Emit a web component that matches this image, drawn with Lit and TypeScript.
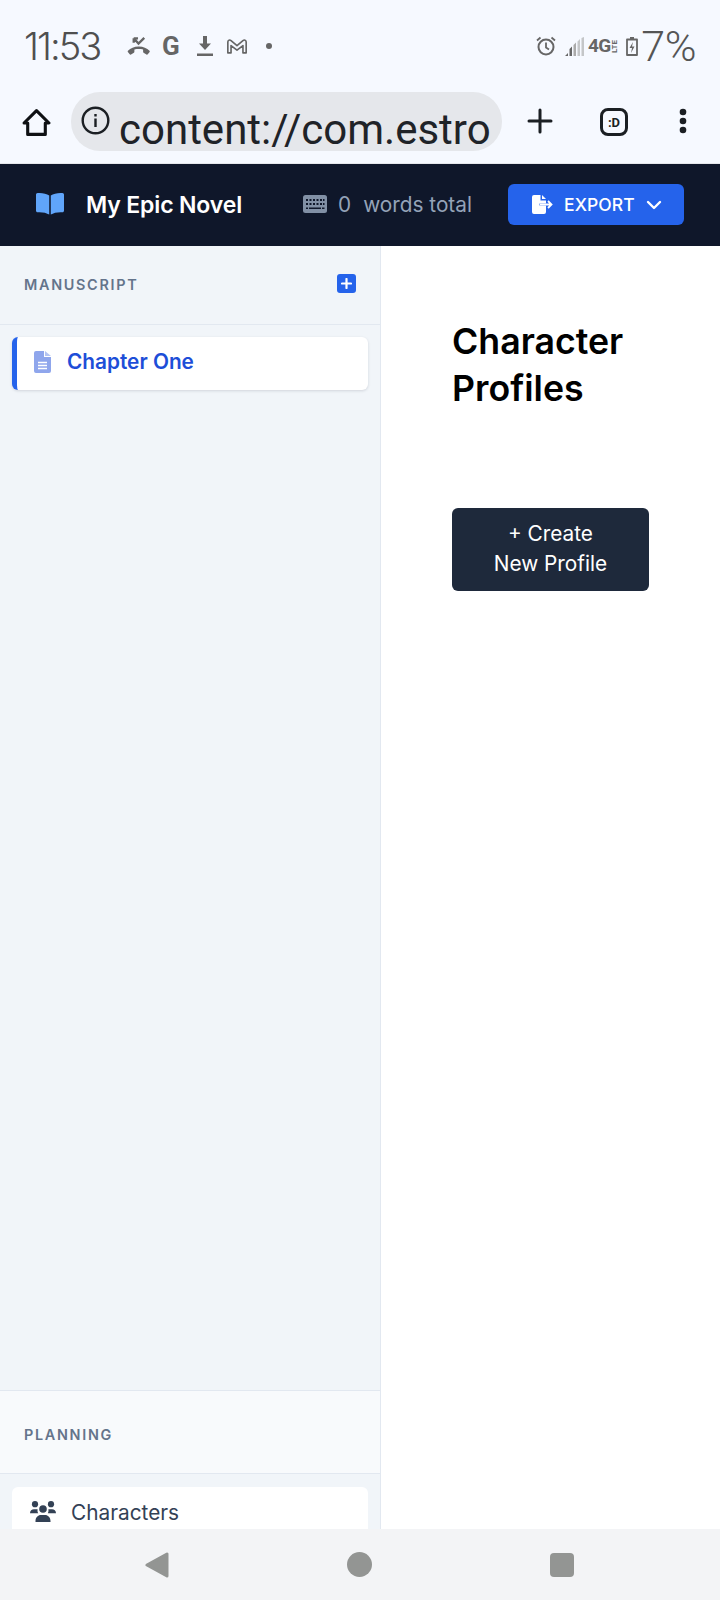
import { LitElement, html, css, svg } from "lit";
import { customElement } from "lit/decorators.js";

const I = (vb: string, cls: string, body: unknown) =>
  html`<svg class=${cls} viewBox=${vb} aria-hidden="true">${body}</svg>`;

@customElement("app-root")
export class AppRoot extends LitElement {
  static styles = css`
    :host { display: block; width: 720px; height: 1600px; overflow: hidden; font-family: Inter, "Liberation Sans", sans-serif; }
    * { box-sizing: border-box; }
    svg { display: block; flex: none; }
    .page { height: 1600px; display: flex; flex-direction: column; background: #fff; }

    .chrome { height: 164px; flex: none; background: #f6f9ff; border-bottom: 1px solid #e5e7eb; display: flex; flex-direction: column; }
    .status { height: 92px; flex: none; display: flex; align-items: flex-start; padding: 24px 24px 0; color: #5f6368; font-family: Roboto, sans-serif; }
    .time { font: 300 38px/44px Inter, sans-serif; width: 76px; flex: none; letter-spacing: -2px; color: #4f4f4f; white-space: nowrap; }
    .notif { display: flex; align-items: center; height: 44px; margin-left: 27px; color: #666; }
    .n1 { width: 23px; height: 20px; }
    .g { font: 700 26px/24px Roboto, sans-serif; margin-left: 12px; width: 21px; }
    .dl { width: 18px; height: 20px; margin-left: 13px; }
    .gm { width: 22px; height: 17px; margin-left: 12px; }
    .dot { width: 6px; height: 6px; border-radius: 50%; background: #666; margin-left: 18px; }
    .sys { margin-left: auto; display: flex; align-items: center; height: 44px; color: #666; }
    .alarm { width: 20px; height: 20px; }
    .sig { width: 20px; height: 19px; margin-left: 9px; }
    .fourg { font: 700 19px/20px Roboto, sans-serif; margin-left: 3px; letter-spacing: -.8px; }
    .lte { font: 700 8px/8px Roboto, sans-serif; writing-mode: vertical-rl; transform: rotate(180deg); margin-left: 1px; }
    .batt { width: 12px; height: 20px; margin-left: 7px; }
    .pct { font-size: 43px; line-height: 44px; font-weight: 300; color: #555; margin-left: 3px; letter-spacing: -0.5px; }

    .toolbar { height: 71px; display: flex; align-items: flex-start; }
    .home { width: 29px; height: 29px; margin: 16px 0 0 22px; }
    .url { width: 431px; height: 59px; margin: 0 0 0 20px; border-radius: 29px; background: #e5e7eb; display: flex; align-items: flex-start; padding-left: 10px; }
    .info { width: 29px; height: 29px; margin-top: 14px; }
    .urltext { font: 400 42px/42px Roboto, sans-serif; color: #1f2328; margin-left: 9px; white-space: nowrap; padding-top: 17px; }
    .plus { width: 26px; height: 26px; margin: 16px 0 0 25px; }
    .tab { width: 28px; height: 28px; margin: 16px 0 0 47px; border: 3.5px solid #1b1f23; border-radius: 8px; display: flex; align-items: center; justify-content: center; font: 700 13px/1 Roboto, sans-serif; color: #1b1f23; }
    .more { width: 8px; height: 26px; margin: 16px 0 0 51px; }

    .header { height: 82px; flex: none; background: #0f172a; display: flex; align-items: center; padding: 0 36px 0 35px; }
    .book { width: 28px; height: 23px; margin: 0 1px 4px 1px; }
    .title { font-size: 23px; font-weight: 600; color: #fff; margin-left: 21px; letter-spacing: -0.15px; white-space: nowrap; }
    .kbd { width: 24px; height: 18px; margin: 0 0 2px 61px; }
    .count { display: flex; align-items: center; font-size: 20.8px; color: #94a3b8; margin-left: 11px; gap: 12px; white-space: nowrap; margin-bottom: 1px; }
    .export { margin: 0 0 1px auto; width: 176px; height: 41px; border-radius: 6px; background: #2563eb; color: #fff; display: flex; align-items: center; padding-left: 24px; font-size: 17.5px; font-weight: 500; letter-spacing: .1px; }
    .fe { width: 21px; height: 19px; margin-right: 11px; }
    .chev { width: 16px; height: 10px; margin-left: 11px; }

    .body { flex: 1; min-height: 0; display: flex; overflow: hidden; }
    .side { width: 381px; flex: none; background: #f1f5f9; border-right: 1px solid #e2e8f0; display: flex; flex-direction: column; }
    .head { height: 79px; flex: none; display: flex; align-items: center; justify-content: space-between; padding: 0 24px 3px; border-bottom: 1px solid #e2e8f0; }
    .label { font-size: 14.4px; font-weight: 600; letter-spacing: 1.7px; color: #64748b; }
    .head .label { margin-top: 2px; }
    .add { width: 19px; height: 19px; border-radius: 3px; background: #2563eb; display: flex; align-items: center; justify-content: center; }
    .add svg { width: 11px; height: 11px; }
    .list { flex: 1; padding: 12px; }
    .item { height: 53px; border-radius: 6px; background: #fff; display: flex; align-items: center; font-size: 20.8px; white-space: nowrap; }
    .item.active { border-left: 5px solid #2563eb; box-shadow: 0 1px 3px rgba(15,23,42,.14); color: #1d4ed8; font-weight: 600; padding: 0 0 4px 17px; }
    .doc { width: 17px; height: 22px; margin-right: 16px; }
    .plan { height: 84px; flex: none; background: #f8fafc; border-top: 1px solid #e2e8f0; border-bottom: 1px solid #e2e8f0; display: flex; align-items: center; padding: 4px 24px 0; }
    .planlist { height: 55px; flex: none; padding: 13px 12px 0; overflow: hidden; }
    .item.plain { color: #334155; padding-left: 18px; height: 53px; align-items: flex-start; padding-top: 13px; }
    .users { width: 26px; height: 21px; margin-right: 15px; margin-top: 1px; }

    .main { flex: 1; padding: 72px 0 0 71px; }
    h2 { margin: 0; width: 200px; font-size: 35.7px; line-height: 47px; font-weight: 600; color: #000; }
    .create { display: block; margin-top: 96px; width: 197px; height: 83px; border: 0; border-radius: 6px; background: #1e293b; color: #fff; font: 400 20.8px/30px Inter, sans-serif; text-align: center; padding: 10px 36px 12px; }

    .nav { height: 71px; flex: none; background: #f3f4f6; display: flex; align-items: center; padding-left: 145px; color: #8f918f; }
    .nav svg { width: 24px; height: 26px; }
    .circle { width: 25px; height: 25px; border-radius: 50%; background: #939593; margin-left: 178px; }
    .square { width: 24px; height: 24px; border-radius: 4px; background: #939593; margin-left: 178px; }
  `;

  render() {
    return html`<div class="page">
      <div class="chrome">
        <div class="status">
          <span class="time">11:53</span>
          <div class="notif">
            ${I("0 0 24 20", "n1", svg`<path fill="currentColor" d="M12 10.500c-4.400 0-8.300 1.700-11 4.400-.4.400-.4 1-.1 1.400l1.900 2.400c.4.400 1 .5 1.400.2l3-1.900c.4-.3.500-.7.500-1.100v-2.300c1.400-.5 3-.5 4.500-.5s3.300 0 4.600.5v2.300c0 .4.100.8.500 1.100l3 1.900c.5.300 1 .2 1.400-.2l1.900-2.400c.3-.4.300-1-.1-1.400-2.700-2.700-6.600-4.400-11-4.400z"/><path fill="none" stroke="currentColor" stroke-width="2.400" d="M7 2l5 5.500L18 1.500M7 2h4.500M7 2v4.500"/>`)}
            <span class="g">G</span>
            ${I("0 0 18 20", "dl", svg`<path fill="currentColor" d="M7 0h4v7.500h4l-6 6.500-6-6.500h4zM1 17.500h16V20H1z"/>`)}
            ${I("0 0 24 18", "gm", svg`<path fill="none" stroke="currentColor" stroke-width="1.800" stroke-linejoin="round" d="M2 16V4c0-2 2-2.600 3.500-1.500L12 8l6.500-5.500C20 1.400 22 2 22 4v12h-3.500V8L12 13 5.500 8v8z"/>`)}
            <span class="dot"></span>
          </div>
          <div class="sys">
            ${I("0 0 20 20", "alarm", svg`<g fill="none" stroke="currentColor"><circle cx="10" cy="11" r="7.500" stroke-width="2"/><path stroke-width="1.800" d="M10 6.500V11.500L13 13.500M1 4.500L4.500 1.500M19 4.500L15.500 1.500"/></g>`)}
            ${I("0 0 20 19", "sig", svg`<path fill="#666" d="M0 19l3-3v3zM4.500 19v-7l2.500-2.500V19z"/><path fill="#aaa" d="M8.500 19V8l2.500-2.500V19z"/><path fill="#c4c6c8" d="M12.500 19V4.500L15 2v17zM16.500 19V1l2.500-1v19z"/>`)}
            <span class="fourg">4G</span>
            <span class="lte">LTE</span>
            ${I("0 0 12 20", "batt", svg`<path fill="none" stroke="currentColor" stroke-width="1.800" stroke-linejoin="round" d="M1 3.500h10V19H1z"/><path fill="currentColor" d="M4 1h4v2.500H4zM7 6L3.500 12H6l-1 5 3.500-6.500H6z"/>`)}
            <span class="pct">7%</span>
          </div>
        </div>
        <div class="toolbar">
          ${I("0 0 28 28", "home", svg`<path fill="none" stroke="#0f1114" stroke-width="3" stroke-linejoin="round" d="M2 14.500L14 2.500l12 12h-3.500V25.500h-17V14.500z"/>`)}
          <div class="url">
            ${I("0 0 29 29", "info", svg`<circle cx="14.500" cy="14.500" r="12.800" fill="none" stroke="#1b1f23" stroke-width="2.400"/><path fill="#1b1f23" d="M13.300 8h2.400v2.400h-2.400zM13.300 12.500h2.400V21h-2.400z"/>`)}
            <span class="urltext">content://com.estro</span>
          </div>
          ${I("0 0 26 26", "plus", svg`<path fill="none" stroke="#1b1f23" stroke-width="3" stroke-linecap="round" d="M13 2v22M2 13h22"/>`)}
          <div class="tab">:D</div>
          ${I("0 0 8 26", "more", svg`<g fill="#1b1f23"><circle cx="4" cy="4" r="3.300"/><circle cx="4" cy="13" r="3.300"/><circle cx="4" cy="22" r="3.300"/></g>`)}
        </div>
      </div>

      <div class="header">
        ${I("0 0 29 23", "book", svg`<path fill="#60a5fa" d="M13.700 3.200C11 1.200 6 .2 1.700.6.700.7 0 1.400 0 2.400v16.500c0 1 .8 1.700 1.800 1.600 4.500-.3 9 .5 11.900 2.500zM15.300 3.200C18 1.200 23 .2 27.300.6c1 .1 1.700.8 1.700 1.800v16.500c0 1-.8 1.700-1.800 1.600-4.500-.3-9 .5-11.900 2.500z"/>`)}
        <span class="title">My Epic Novel</span>
        ${I("0 0 24 18", "kbd", svg`<rect width="24" height="18" rx="2.500" fill="#8190a5"/><g fill="#0f172a"><path d="M3 4h2v2H3zM6.500 4h2v2h-2zM10 4h2v2h-2zM13.500 4h2v2h-2zM17 4h2v2h-2zM20 4h1.500v2H20zM3 8h2v2H3zM6.500 8h2v2h-2zM10 8h2v2h-2zM13.500 8h2v2h-2zM17 8h2v2h-2zM20 8h1.500v2H20zM6 12.500h12V14H6zM3 12.500h2V14H3zM19 12.500h2.500V14H19z"/></g>`)}
        <span class="count"><span>0</span><span>words total</span></span>
        <div class="export">
          ${I("0 0 21 19", "fe", svg`<path fill="#fff" d="M0 2a2 2 0 012-2h6.500v5.500H14V8.500H7.500v2H14V17a2 2 0 01-2 2H2a2 2 0 01-2-2zM10 0l4 4h-4z"/><path fill="none" stroke="#fff" stroke-width="1.800" d="M8 9.500h11.500M16 6l3.500 3.500L16 13"/>`)}
          EXPORT
          ${I("0 0 16 10", "chev", svg`<path fill="none" stroke="#fff" stroke-width="2.400" stroke-linecap="round" stroke-linejoin="round" d="M2 2l6 6 6-6"/>`)}
        </div>
      </div>

      <div class="body">
        <aside class="side">
          <div class="head">
            <span class="label">MANUSCRIPT</span>
            <span class="add">${I("0 0 11 11", "", svg`<path stroke="#fff" stroke-width="2.200" stroke-linecap="round" d="M5.500 1v9M1 5.500h9"/>`)}</span>
          </div>
          <div class="list">
            <div class="item active">
              ${I("0 0 17 22", "doc", svg`<path fill="#8fa6ec" d="M0 2a2 2 0 012-2h8v6h7v14a2 2 0 01-2 2H2a2 2 0 01-2-2z"/><path fill="#b4c4f2" d="M11 0l6 5h-6z"/><path stroke="#fff" stroke-width="1.500" d="M4 11.500h9M4 14.500h9M4 17.500h9"/>`)}
              Chapter One
            </div>
          </div>
          <div class="plan"><span class="label">PLANNING</span></div>
          <div class="planlist">
            <div class="item plain">
              ${I("0 0 26 21", "users", svg`<g fill="#334155"><circle cx="5" cy="3.200" r="3.100"/><circle cx="21" cy="3.200" r="3.100"/><circle cx="13" cy="8" r="3.800"/><path d="M0 12.200c0-2.400 1.800-4 4-4h2.500c.4 0 .8.100 1.200.3-.4 1.100-.2 2.600.5 3.700zM26 12.200c0-2.400-1.800-4-4-4h-2.500c-.4 0-.8.100-1.200.3.400 1.100.2 2.600-.5 3.700zM5.500 20c0-3.600 2.500-6 5.500-6h4c3 0 5.500 2.400 5.500 6v1h-15z"/></g>`)}
              Characters
            </div>
          </div>
        </aside>
        <main class="main">
          <h2>Character Profiles</h2>
          <button class="create">+ Create New Profile</button>
        </main>
      </div>

      <div class="nav">
        ${I("0 0 24 26", "", svg`<path fill="#939593" stroke="#939593" stroke-width="3" stroke-linejoin="round" d="M22 2v22L2 13z"/>`)}
        <span class="circle"></span>
        <span class="square"></span>
      </div>
    </div>`;
  }
}
